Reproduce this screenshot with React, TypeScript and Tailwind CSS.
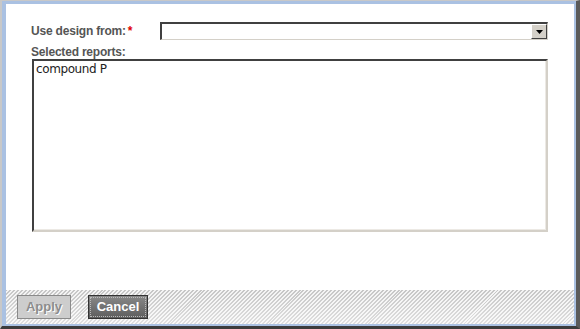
export default function App() {
  return (
    <div className="w-[580px] h-[329px] bg-[#d4d0c8] border-l-2 border-t border-[#c8c8c8] border-r-[4px] border-r-[#5a5a5a] border-b-[3px] border-b-[#3c3c3c] font-['Liberation_Sans',Arial,sans-serif]">
      <div className="h-full flex flex-col bg-white border-l-4 border-t-[3px] border-r-2 border-b-2 border-[#aac1e2]">
        <div className="flex-1 pl-[25px] pt-[18px]">
          <div className="flex items-center h-[18px]">
            <div className="w-[129px] text-[12px] font-bold text-[#555] tracking-[-0.2px]">
              Use design from:<span className="text-[#e00000] ml-[2px]">*</span>
            </div>
            <div className="w-[388px] h-[18px] flex border-t-2 border-l-2 border-[#404040] border-r border-b border-r-[#d4d0c8] border-b-[#d4d0c8] bg-white">
              <div className="flex-1" />
              <div className="w-[16px] h-[15px] bg-[#d4d0c8] border-r border-b border-[#404040] border-t border-l border-t-white border-l-white flex items-center justify-center">
                <svg width="7" height="4" viewBox="0 0 7 4">
                  <path d="M0 0h7L3.5 4z" fill="#000" />
                </svg>
              </div>
            </div>
          </div>
          <div className="mt-[5px] text-[12px] font-bold text-[#555] leading-[14px] tracking-[-0.2px]">
            Selected reports:
          </div>
          <div className="ml-[1px] w-[516px] h-[173px] border-t-2 border-l-2 border-[#404040] border-r-2 border-b-2 border-r-[#d4d0c8] border-b-[#d4d0c8] bg-white">
            <div className="h-full border-r border-b border-[#ece9e4] px-[2px] pt-[1px] text-[12px] text-[#222] leading-[15px] font-['DejaVu_Sans',sans-serif] tracking-[-0.4px]">
              compound P
            </div>
          </div>
        </div>
        <div className="h-[34px] flex items-center gap-[17px] pl-[11px] bg-[linear-gradient(to_bottom,rgba(255,255,255,0),rgba(255,255,255,0.45)),repeating-linear-gradient(135deg,#c6c6c6_0px,#c6c6c6_1.4px,#f4f4f4_1.4px,#f4f4f4_2.8px)]">
          <button className="w-[54px] h-[24px] bg-[#cdcdcd] border border-[#8a8a8a] text-[13px] font-bold text-[#8c8c8c] [text-shadow:1px_1px_0_#fff]">
            Apply
          </button>
          <button className="w-[60px] h-[24px] bg-gradient-to-b from-[#888] to-[#5e5e5e] border border-[#333] p-[1px] text-[13px] font-bold text-white">
            <div className="h-full border border-dotted border-[#bbb] flex items-center justify-center">
              Cancel
            </div>
          </button>
        </div>
      </div>
    </div>
  )
}
